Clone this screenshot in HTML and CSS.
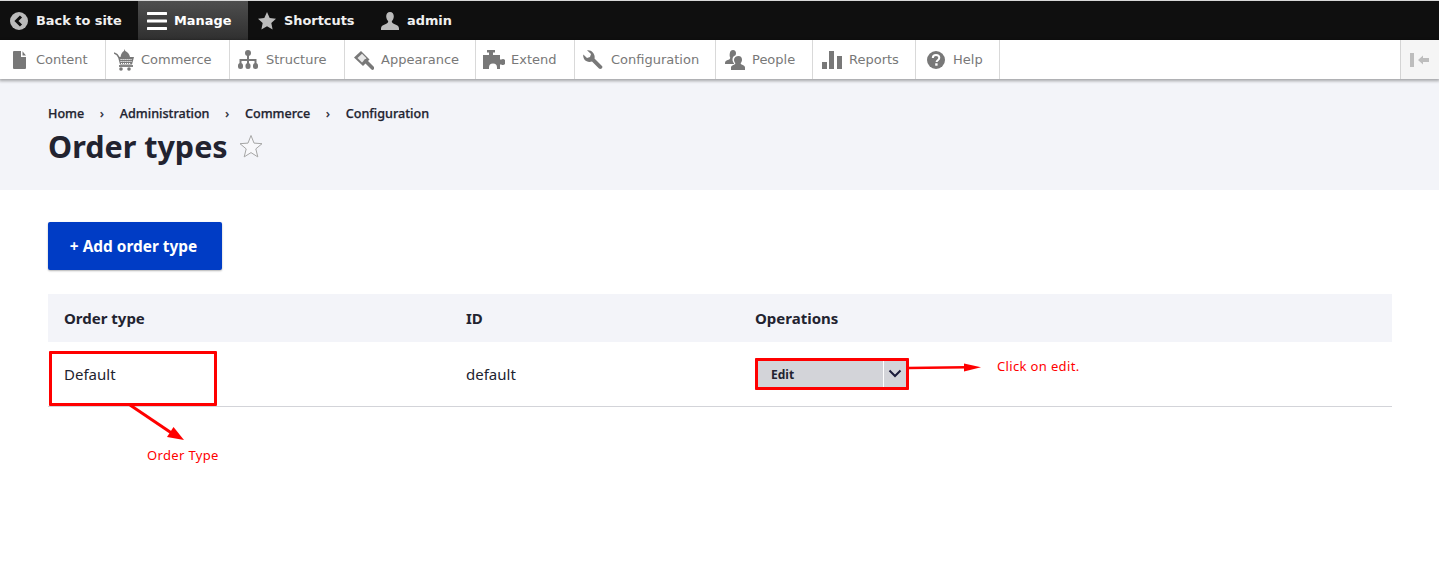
FILE: index.html
```html
<!DOCTYPE html>
<html lang="en">
<head>
<meta charset="utf-8">
<title>Order types</title>
<link rel="stylesheet" href="styles.css">
</head>
<body>
<div class="page">
  <nav class="bar">
    <a class="bar-item back">
      <svg class="bar-icon" viewBox="0 0 18 18"><circle cx="9" cy="9" r="9" fill="#bbb"/><path d="M11 4.500 6.500 9l4.500 4.500" fill="none" stroke="#0f0f0f" stroke-width="3"/></svg>
      Back to site</a>
    <a class="bar-item manage">
      <svg class="bar-icon burger" viewBox="0 0 20 20"><path d="M1 2.500h18M1 10h18M1 17.500h18" fill="none" stroke="#fff" stroke-width="3.200" stroke-linecap="round"/></svg>
      Manage</a>
    <a class="bar-item shortcuts">
      <svg class="bar-icon" viewBox="0 0 18 18"><path d="M9 0l2.700 6 6.300.700-4.700 4.300 1.300 6.500L9 14.200 3.400 17.500l1.300-6.500L0 6.700 6.300 6z" fill="#bbb"/></svg>
      Shortcuts</a>
    <a class="bar-item user">
      <svg class="bar-icon" viewBox="0 0 18 18"><path d="M9 0c2.500 0 3.800 2 3.800 4.300 0 2.300-1 4-2 5 0 1.500 1 2.300 3.500 3.200 2.500.9 3.700 2 3.700 4V18H0v-1.500c0-2 1.200-3.100 3.700-4C6.200 11.600 7.200 10.800 7.200 9.300c-1-1-2-2.700-2-5C5.200 2 6.500 0 9 0z" fill="#bbb"/></svg>
      admin</a>
  </nav>
  <nav class="tray">
    <a class="tray-item i-content">
      <svg class="tray-icon" viewBox="0 0 16 18"><path d="M2 0h7v6h5v11a1 1 0 0 1-1 1H2a1 1 0 0 1-1-1V1a1 1 0 0 1 1-1zm8.500.3L14 4.600h-3.500z" fill="#787878"/></svg>
      Content</a>
    <a class="tray-item i-commerce">
      <svg class="tray-icon cart" viewBox="0 0 20 22"><path d="M0 4l3 1.500 2 3" fill="none" stroke="#787878" stroke-width="1.500"/><path d="M4 8h2.500C7 4.500 8.500 2.500 10 2l.5-2 .8 2C13.500 3 15.500 5 16 8h4l-2 7.500H6z" fill="#787878"/><path d="M6.500 10.500h11M6.500 12.500h11M7 14.500h10" stroke="#fff" stroke-width="1" stroke-dasharray="1.200 .8"/><path d="M5 17h14" stroke="#787878" stroke-width="1.800"/><circle cx="7" cy="20" r="1.800" fill="#787878"/><circle cx="15" cy="20" r="1.800" fill="#787878"/></svg>
      Commerce</a>
    <a class="tray-item i-structure">
      <svg class="tray-icon wide" viewBox="0 0 20 20"><circle cx="10" cy="3" r="3" fill="#787878"/><rect x="0" y="13" width="5" height="6" rx="2.500" fill="#787878"/><rect x="7.500" y="13" width="5" height="6" rx="2.500" fill="#787878"/><rect x="15" y="13" width="5" height="6" rx="2.500" fill="#787878"/><path d="M10 4v10M2.500 14v-4h15v4" fill="none" stroke="#787878" stroke-width="2"/></svg>
      Structure</a>
    <a class="tray-item i-appearance">
      <svg class="tray-icon wide" viewBox="0 0 20 20"><path d="M0 7.500 7 1l8.500 8.500L9 16z" fill="#787878"/><path d="M3.500 8 8 3.800l4.500 4.500L8 12.500z" fill="#e8e8e8"/><path d="M11.500 11 18.500 18" stroke="#787878" stroke-width="3.600" stroke-linecap="round"/></svg>
      Appearance</a>
    <a class="tray-item i-extend">
      <svg class="tray-icon puzzle" viewBox="0 0 22 20"><path d="M4 0h8v2.500h-2V5h7v4.500h1.200a3 3 0 1 1 0 5H17V19h-3v-1.500a4 4 0 0 0-8 0V19H0V5h6V2.500H4z" fill="#787878"/></svg>
      Extend</a>
    <a class="tray-item i-config">
      <svg class="tray-icon wide" viewBox="0 0 20 20"><path d="M4 .3 8 4 7 7 4 8 .3 4.500C-.3 8 2 12 6.500 12L9 11.500 16 18.500C17.500 20 20.500 17.500 19 16L11.500 8.500C12.500 4.500 9-.5 4 .3z" fill="#787878"/></svg>
      Configuration</a>
    <a class="tray-item i-people">
      <svg class="tray-icon wide" viewBox="0 0 20 20"><path d="M8 0c2 0 3 1.500 3 3.300 0 .8-.2 1.400-.5 2-1.900.6-3 2.200-3 4.200 0 1.500.6 2.800 1.500 3.800L9 14H0v-1c0-2 1.300-2.400 3.500-3.200 1-.4 1.700-1 1.700-2.300C4.600 6.800 4.500 5 4.800 3.300 5 1.500 6 0 8 0z" fill="#787878"/><path d="M13.500 6c2.300 0 3.500 1.700 3.500 3.700 0 1.300-.5 2.500-1.300 3.300 0 1 .5 1.500 2 2 1.400.5 2.300 1.200 2.300 2.500V20H6v-2.500c0-1.300.9-2 2.300-2.500 1.500-.5 2-1 2-2-.8-.8-1.300-2-1.300-3.300C9 7.700 11.200 6 13.500 6z" fill="#787878"/></svg>
      People</a>
    <a class="tray-item i-reports">
      <svg class="tray-icon wide" viewBox="0 0 20 18"><rect x="0" y="11" width="5" height="7" fill="#787878"/><rect x="7" y="0" width="5" height="18" fill="#787878"/><rect x="15" y="5" width="5" height="13" fill="#787878"/></svg>
      Reports</a>
    <a class="tray-item i-help">
      <svg class="tray-icon wide" viewBox="0 0 18 18"><circle cx="9" cy="9" r="9" fill="#787878"/><path d="M5.800 7C5.800 5 7.300 4 9 4c2 0 3.300 1.200 3.300 2.800 0 2.400-2.700 2.400-2.700 4.200" fill="none" stroke="#fff" stroke-width="2"/><rect x="8.200" y="12.300" width="2.400" height="2.400" fill="#fff"/></svg>
      Help</a>
    <span class="tray-fill"></span>
    <button class="tray-toggle" aria-label="Collapse">
      <svg viewBox="0 0 20 14" width="20" height="14"><rect x="0" y="0" width="4" height="14" fill="#bdbdbd"/><path d="M8 7l5-4.500V5h6v4h-6v2.500z" fill="#bdbdbd"/></svg>
    </button>
  </nav>
  <header class="head">
    <ol class="crumbs">
      <li>Home</li><li class="sep">›</li>
      <li>Administration</li><li class="sep">›</li>
      <li>Commerce</li><li class="sep">›</li>
      <li>Configuration</li>
    </ol>
    <div class="title-row">
      <h1>Order types</h1>
      <svg class="fav" viewBox="0 0 24 24"><path d="M12 1.500l3 7.600 8 .6-6.200 5.200 2 8L12 18.600 5.200 22.900l2-8L1 9.700l8-.6z" fill="#fff" fill-opacity=".4" stroke="#a6a6a6" stroke-width="1"/></svg>
    </div>
  </header>
  <main class="main">
    <a class="add">+ Add order type</a>
    <table class="types">
      <thead><tr><th class="c1">Order type</th><th class="c2">ID</th><th>Operations</th></tr></thead>
      <tbody>
        <tr>
          <td class="c1">Default</td>
          <td class="c2">default</td>
          <td><div class="drop"><span class="drop-main">Edit</span><span class="drop-arrow"><svg viewBox="0 0 14 9" width="14" height="9"><path d="M1.500 1.500 7 7l5.500-5.500" fill="none" stroke="#1b1b3a" stroke-width="2"/></svg></span></div></td>
        </tr>
      </tbody>
    </table>
  </main>

  <div class="note-box box-type"></div>
  <div class="note-box box-edit"></div>
  <svg class="note-lines" viewBox="0 0 1439 580" width="1439" height="580">
    <path d="M130 405l43 29" stroke="#f00" stroke-width="3" fill="none"/>
    <path d="M184 440l-17-3 6.500-10z" fill="#f00"/>
    <path d="M908 368l58-.7" stroke="#f00" stroke-width="2.500" fill="none"/>
    <path d="M981 367.200l-17 4.300v-8z" fill="#f00"/>
  </svg>
  <span class="note note-type">Order Type</span>
  <span class="note note-edit">Click on edit.</span>
</div>
</body>
</html>
```
FILE: styles.css
```css
* { box-sizing: border-box; }
html, body { margin: 0; padding: 0; background: #fff; }
.page {
  position: relative;
  width: 1439px;
  height: 580px;
  overflow: hidden;
  font-family: "Noto Sans", sans-serif;
  color: #222330;
}
.bar {
  display: flex;
  height: 40px;
  border-top: 1px solid #d8d8d8;
  background: #0f0f0f;
  font-family: "DejaVu Sans", sans-serif;
  font-weight: 700;
  font-size: 12.900px;
  color: #f0f0f0;
}
.bar-item {
  display: flex;
  align-items: center;
  gap: 8px;
  height: 39px;
  white-space: nowrap;
}
.bar-icon { width: 18px; height: 18px; flex: none; }
.burger { width: 20px; height: 20px; }
.back { width: 138px; padding-left: 10px; }
.manage {
  width: 110px;
  padding-left: 9px;
  gap: 7px;
  color: #fff;
  background: linear-gradient(#4e4e4e, #2f2f2f);
}
.shortcuts { width: 133px; padding-left: 10px; }
.tray {
  position: relative;
  display: flex;
  height: 39px;
  background: #fff;
  box-shadow: 0 1px 3px 1px rgba(0, 0, 0, .33);
  font-family: "DejaVu Sans", sans-serif;
  font-size: 13px;
  color: #787878;
}
.tray-item {
  display: flex;
  align-items: center;
  gap: 8px;
  border-right: 1px solid #d9d9d9;
  white-space: nowrap;
}
.tray-icon { width: 16px; height: 18px; flex: none; }
.tray-icon.wide { width: 20px; height: 20px; }
.tray-icon.cart { width: 20px; height: 22px; }
.tray-icon.puzzle { width: 22px; height: 20px; }
.i-content { width: 106px; padding-left: 12px; }
.i-commerce { width: 124px; padding-left: 8px; gap: 7px; }
.i-structure { width: 115px; padding-left: 8px; }
.i-appearance { width: 131px; padding-left: 9px; gap: 7px; }
.i-extend { width: 99px; padding-left: 7px; gap: 6px; }
.i-config { width: 141px; padding-left: 8px; gap: 8px; }
.i-people { width: 97px; padding-left: 9px; gap: 7px; }
.i-reports { width: 103px; padding-left: 9px; gap: 7px; }
.i-help { width: 84px; padding-left: 11px; gap: 8px; }
.i-help .tray-icon { width: 18px; height: 18px; }
.tray-fill { flex: 1; }
.tray-toggle {
  width: 39px;
  height: 39px;
  padding: 0;
  border: 0;
  border-left: 1px solid #d4d4d4;
  background: #f5f5f5;
  display: flex;
  align-items: center;
  justify-content: center;
}
.head {
  height: 111px;
  padding: 25px 48px 0;
  background: #f3f4f9;
}
.crumbs {
  display: flex;
  list-style: none;
  margin: 0;
  padding: 0;
  font-size: 12.600px;
  font-weight: 500;
  line-height: 20px;
  color: #222330;
  -webkit-text-stroke: .25px #222330;
}
.sep { margin: 0 15.800px; font-weight: 400; }
.title-row {
  display: flex;
  align-items: center;
  gap: 11px;
  margin-top: 1px;
}
h1 {
  margin: 0;
  font-size: 30.500px;
  line-height: 42px;
  font-weight: 700;
  color: #222330;
}
.fav { width: 24px; height: 24px; flex: none; }
.main { padding: 32px 47px 0 48px; }
.add {
  display: block;
  width: 174px;
  height: 48px;
  padding-right: 3px;
  line-height: 50px;
  text-align: center;
  border-radius: 2px;
  background: #003cc5;
  box-shadow: 0 1px 2px rgba(0, 0, 0, .3);
  color: #fff;
  font-size: 15.400px;
  font-weight: 700;
}
.types {
  width: 1344px;
  margin-top: 24px;
  border-collapse: collapse;
  table-layout: fixed;
  font-size: 15px;
}
.types th {
  height: 48px;
  padding: 0 16px 0 0;
  background: #f3f4f9;
  text-align: left;
  font-weight: 700;
  color: #222330;
}
.types td {
  height: 64px;
  padding: 0 16px 0 0;
  border-bottom: 1px solid #d3d4d9;
}
.types .c1 { width: 402px; padding-left: 16px; }
.types .c2 { width: 305px; padding-left: 16px; }
.types th:nth-child(3), .types td:nth-child(3) { padding-left: 0; }
.drop {
  display: flex;
  width: 154px;
  height: 32px;
  background: #d3d4d9;
  font-size: 12px;
  font-weight: 700;
  line-height: 33px;
}
.drop-main { flex: 1; padding-left: 16px; }
.drop-arrow {
  width: 26px;
  padding-right: 3px;
  display: flex;
  align-items: center;
  justify-content: center;
  border-left: 1px solid #fff;
}
.note-box {
  position: absolute;
  border: 3px solid #f00;
  border-radius: 1px;
}
.box-type { left: 49px; top: 351px; width: 168px; height: 55px; }
.box-edit { left: 755px; top: 358px; width: 154px; height: 32px; }
.note-lines { position: absolute; left: 0; top: 0; pointer-events: none; }
.note {
  position: absolute;
  font-family: "Noto Sans", sans-serif;
  font-size: 13px;
  letter-spacing: .35px;
  line-height: 16px;
  color: #f00;
  white-space: nowrap;
}
.note-type { left: 147px; top: 447px; }
.note-edit { left: 997px; top: 358px; }
```
